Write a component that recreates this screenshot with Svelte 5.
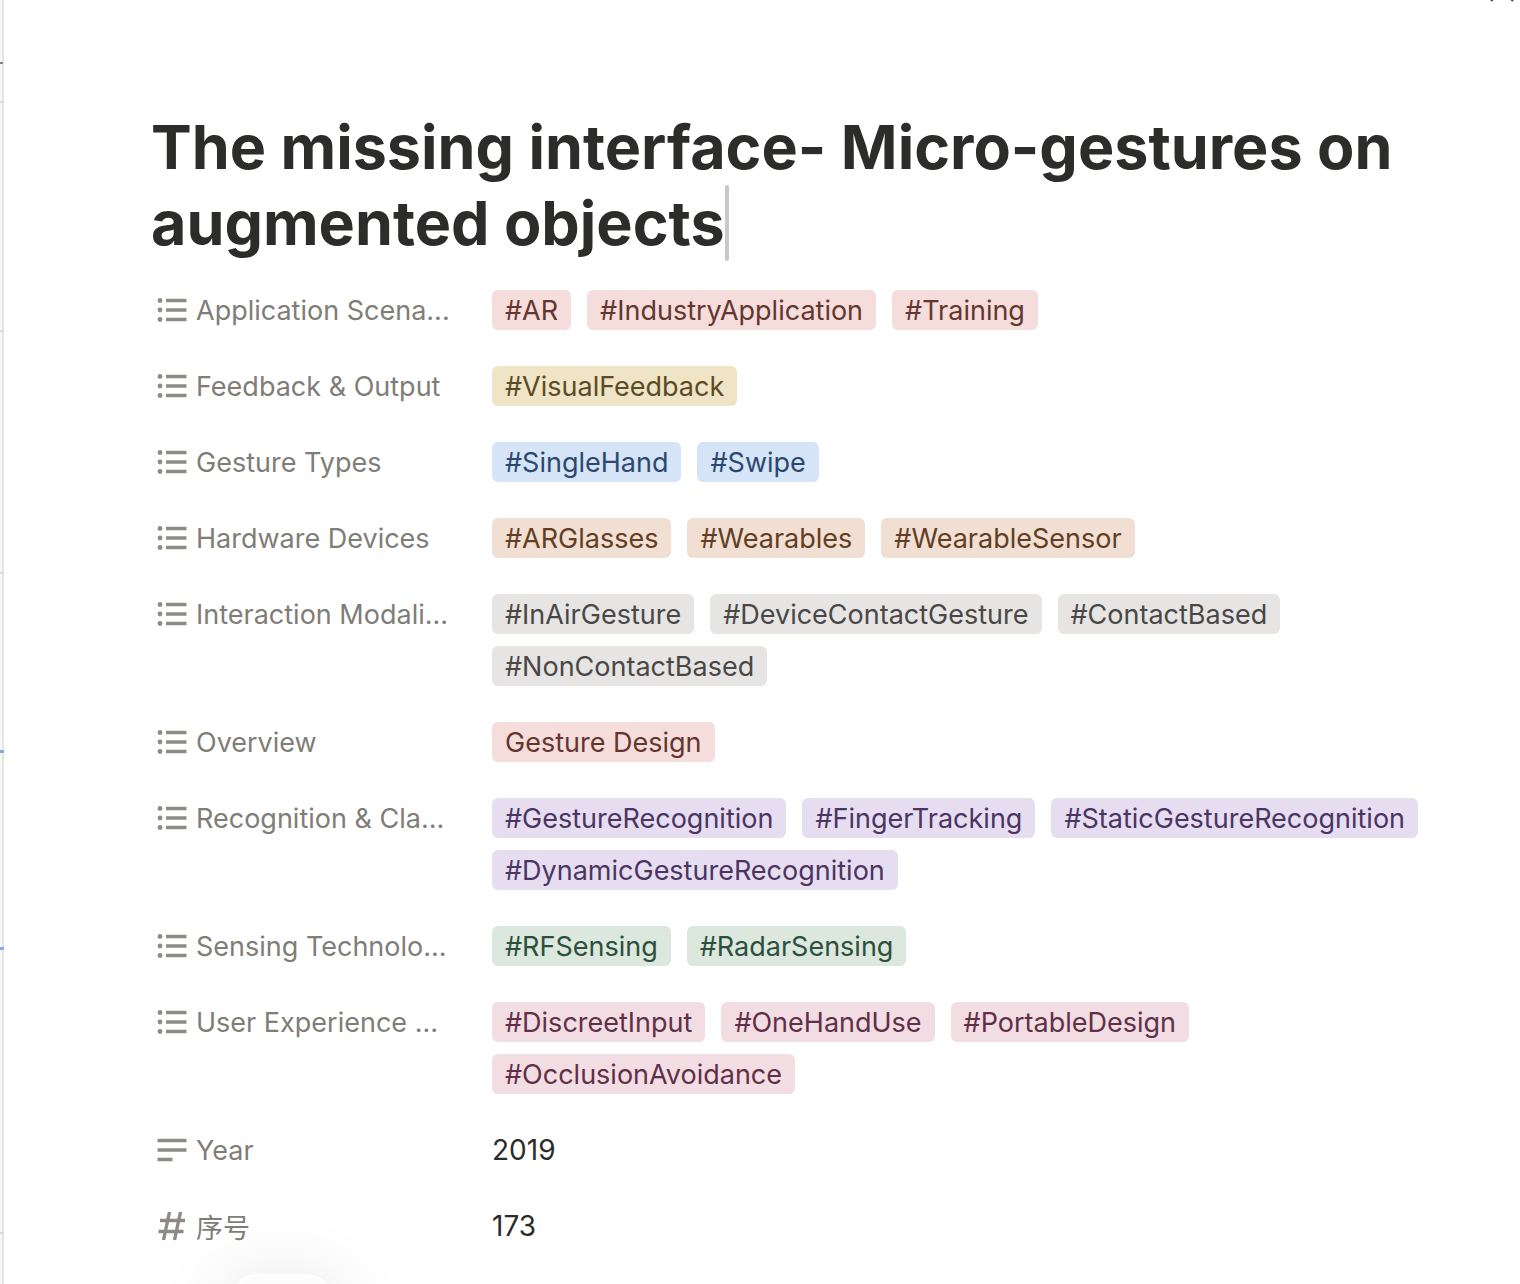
<script>
  const rows = [
    { name: 'Application Scena...', color: 'red', tags: ['#AR', '#IndustryApplication', '#Training'] },
    { name: 'Feedback & Output', color: 'yellow', tags: ['#VisualFeedback'] },
    { name: 'Gesture Types', color: 'blue', tags: ['#SingleHand', '#Swipe'] },
    { name: 'Hardware Devices', color: 'orange', tags: ['#ARGlasses', '#Wearables', '#WearableSensor'] },
    { name: 'Interaction Modali...', color: 'gray', tags: ['#InAirGesture', '#DeviceContactGesture', '#ContactBased', '#NonContactBased'] },
    { name: 'Overview', color: 'red', tags: ['Gesture Design'] },
    { name: 'Recognition & Cla...', color: 'purple', tags: ['#GestureRecognition', '#FingerTracking', '#StaticGestureRecognition', '#DynamicGestureRecognition'] },
    { name: 'Sensing Technolo...', color: 'green', tags: ['#RFSensing', '#RadarSensing'] },
    { name: 'User Experience ...', color: 'pink', tags: ['#DiscreetInput', '#OneHandUse', '#PortableDesign', '#OcclusionAvoidance'] },
    { name: 'Year', icon: 'text', value: '2019' },
    { name: '序号', icon: 'number', value: '173' }
  ];
  // Edge of the table behind the peek panel
  const marks = [
    { y: 62, kind: 'ink' },
    { y: 101, kind: 'line' },
    { y: 330, kind: 'line' },
    { y: 572, kind: 'line' },
    { y: 750, kind: 'focus' },
    { y: 947, kind: 'focus' },
    { y: 1232, kind: 'line' }
  ];
</script>

<div class="shell">
  <div class="behind" aria-hidden="true">
    {#each marks as mark}<i class={mark.kind} style="top: {mark.y}px"></i>{/each}
  </div>
  <main class="page">
    <h1>The missing interface- Micro-gestures on augmented objects<span class="caret"></span></h1>
    <dl>
      {#each rows as row}
        <div class="row">
          <dt>
            <svg viewBox="0 0 32 32" aria-hidden="true">
              {#if row.icon === 'text'}
                <path d="M1.5 6.5h29M1.5 16h29M1.5 25.5h15" />
              {:else if row.icon === 'number'}
                <path d="M13.5 2L7.5 30M24.500 2L18.500 30M4 10.500h25M2.500 21.500h25" />
              {:else}
                <path d="M10 6.500h20.500M10 16h20.500M10 25.500h20.500" />
                <circle cx="4" cy="6.500" r="2.400" />
                <circle cx="4" cy="16" r="2.400" />
                <circle cx="4" cy="25.500" r="2.400" />
              {/if}
            </svg>
            <span>{row.name}</span>
          </dt>
          <dd>
            {#if row.tags}
              {#each row.tags as tag}<span class="tag {row.color}">{tag}</span>{/each}
            {:else}
              <span class="value">{row.value}</span>
            {/if}
          </dd>
        </div>
      {/each}
    </dl>
    <svg class="close" viewBox="0 0 24 24" aria-hidden="true"><path d="M1 0L23 22M23 0L1 22" /></svg>
    <div class="popover"></div>
  </main>
</div>

<style>
  :global(body) { background: #fff; overflow: hidden; }
  .shell { display: flex; position: relative; overflow: hidden; min-height: 100vh; font-family: Inter, "Noto Sans CJK SC", sans-serif; color: #2c2c2b; }
  .behind { flex: none; position: relative; box-sizing: border-box; width: 4px; background: #f7f7f6; border-right: 2px solid #e5e5e4; }
  .behind i { position: absolute; left: 0; width: 4px; height: 2px; }
  .behind .ink { width: 3px; background: #858585; }
  .line { background: #dcdcda; }
  .behind .focus { height: 3px; background: #84aadf; }
  .page { flex: 1; min-width: 0; box-sizing: border-box; padding: 109px 64px 0 147px; }
  h1 { margin: 0; font-size: 61px; line-height: 76px; font-weight: 700; }
  .caret { display: inline-block; width: 4px; height: 76px; border-radius: 2px; background: #c8c8c8; vertical-align: top; }
  dl { margin: 11px 0 0; }
  .row { display: flex; align-items: flex-start; padding: 12px 0; }
  dt { display: flex; flex: 0 0 341px; align-items: center; height: 52px; gap: 8px; padding-left: 5px; box-sizing: border-box; font-size: 27px; color: #7f7d78; }
  svg { width: 32px; height: 32px; fill: none; stroke: #8e8b86; stroke-width: 3.4; }
  circle { fill: #8e8b86; stroke: none; }
  dd { display: flex; flex: 1; min-width: 0; flex-wrap: wrap; gap: 12px 16px; margin: 0; padding: 6px 0; font-size: 27px; line-height: 40px; }
  .value { font-size: 28px; }
  .tag { padding: 1px 13px 0; line-height: 39px; border-radius: 6px; }
  .red { background: #f4dddb; color: #65352f; }
  .yellow { background: #efe4c6; color: #5c4b24; }
  .blue { background: #d5e4f7; color: #2b486f; }
  .orange { background: #f1dfd3; color: #623e23; }
  .gray { background: #e6e5e3; color: #494846; }
  .purple { background: #e7ddf0; color: #4a3563; }
  .green { background: #dce7de; color: #2c503c; }
  .pink { background: #f2dde3; color: #612f47; }
  .close { position: absolute; top: -21px; right: 6px; width: 24px; height: 24px; stroke: #444; stroke-width: 2; }
  .popover { position: absolute; bottom: -70px; left: 230px; width: 104px; height: 80px; box-sizing: border-box; border: 2px solid #fff; border-radius: 28px; background: #fcfcfc; box-shadow: 0 16px 80px #00000028; }
</style>
